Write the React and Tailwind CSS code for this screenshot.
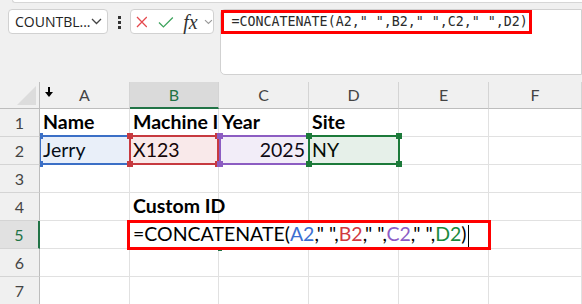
import React from "react";

const COLS = ["A", "B", "C", "D", "E", "F"];

// range highlight with corner handles
const RefBox = ({ left, top, w, h, line, fill }) => (
  <div className="absolute" style={{ left, top, width: w, height: h }}>
    <div className="absolute inset-0 border-2" style={{ borderColor: line, backgroundColor: fill }} />
    <div className="absolute w-[6px] h-[6px]" style={{ left: -2, top: -2, backgroundColor: line }} />
    <div className="absolute w-[6px] h-[6px]" style={{ left: w - 4, top: -2, backgroundColor: line }} />
    <div className="absolute w-[6px] h-[6px]" style={{ left: -2, top: h - 4, backgroundColor: line }} />
    <div className="absolute w-[6px] h-[6px]" style={{ left: w - 4, top: h - 4, backgroundColor: line }} />
  </div>
);

const Cell = ({ children, className = "" }) => (
  <div className={"border-r border-b border-[#e1e1e1] text-[19.5px] leading-[26px] text-black whitespace-nowrap pl-[3px] " + className}>
    {children}
  </div>
);

const RowHead = ({ n, active }) => (
  <div
    className={
      "flex items-center justify-center text-[16px] border-b border-[#d4d4d4] " +
      (active
        ? "bg-[#e1e1e1] text-[#217346] border-r-2 border-r-[#217346]"
        : "bg-[#f0f0f0] text-[#444] border-r border-r-[#bdbdbd]")
    }
  >
    {n}
  </div>
);

export default function App() {
  return (
    <div className="w-[582px] h-[304px] overflow-hidden bg-[#f0f0f0] font-['Lato',sans-serif]">
      {/* ribbon edge */}
      <div className="ml-[12px] h-[3px] bg-white border-b border-l border-[#d6d6d6] rounded-bl-[4px]" />

      {/* formula toolbar */}
      <div className="flex items-start pl-[8px] pt-[6px] h-[79px]">
        <div className="w-[101px] h-[25px] rounded-[4px] border border-[#d1d1d1] bg-white flex items-center justify-between pl-[6px] pr-[5px]">
          <span className="font-['Open_Sans',sans-serif] text-[14px] text-[#222] leading-none">COUNTBL...</span>
          <svg width="11" height="7" viewBox="0 0 11 7">
            <path d="M1 1l4.5 4.5L10 1" fill="none" stroke="#444" strokeWidth="1.3" />
          </svg>
        </div>
        <div className="ml-[10px] mt-[7px] flex flex-col gap-[2px]">
          <div className="w-[3px] h-[3px] bg-[#333]" />
          <div className="w-[3px] h-[3px] bg-[#333]" />
          <div className="w-[3px] h-[3px] bg-[#333]" />
        </div>
        <div className="ml-[9px] w-[84px] h-[25px] rounded-[4px] border border-[#d1d1d1] bg-white flex items-center pl-[5px]">
          <svg width="12" height="12" viewBox="0 0 12 12">
            <path d="M1 1l10 10M11 1L1 11" stroke="#e5484d" strokeWidth="1.3" />
          </svg>
          <svg className="ml-[11px]" width="16" height="12" viewBox="0 0 16 12">
            <path d="M1 6.5l4.5 4.5L15 1.5" fill="none" stroke="#3da35d" strokeWidth="1.3" />
          </svg>
          <span className="ml-[9px] font-['Liberation_Serif',serif] italic text-[20px] leading-none text-[#333]">fx</span>
          <svg className="ml-[6px]" width="9" height="6" viewBox="0 0 9 6">
            <path d="M1 1l3.5 3.5L8 1" fill="none" stroke="#999" strokeWidth="1.1" />
          </svg>
        </div>
        <div className="ml-[6px] w-[380px] h-[66px] rounded-l-[5px] border border-[#d1d1d1] bg-white">
          <div className="w-[311px] h-[24px] border-[3px] border-[#ff0000] flex items-center pl-[8px]">
            <span className="font-['DejaVu_Sans_Mono',monospace] text-[13.3px] text-[#2b2b2b] leading-none">
              =CONCATENATE(A2," ",B2," ",C2," ",D2)
            </span>
          </div>
        </div>
      </div>

      {/* sheet */}
      <div className="relative grid grid-cols-[40px_90px_89px_90px_90px_90px_93px] grid-rows-[27px_28px_28px_28px_28px_28px_28px_28px] bg-white">
        {/* corner */}
        <div className="relative bg-[#f0f0f0] border-r border-b border-[#bdbdbd]">
          <div className="absolute right-[3px] bottom-[3px] w-0 h-0 border-l-[19px] border-l-transparent border-b-[19px] border-b-[#dcdcdc]" />
        </div>
        {COLS.map((c) =>
          c === "B" ? (
            <div key={c} className="flex items-center justify-center text-[16px] bg-[#dadada] text-[#217346] border-r border-r-[#d4d4d4] border-b-2 border-b-[#217346]">
              {c}
            </div>
          ) : (
            <div key={c} className="flex items-center justify-center text-[16px] bg-[#f0f0f0] text-[#444] border-r border-r-[#d4d4d4] border-b border-b-[#bdbdbd]">
              {c}
            </div>
          )
        )}

        {/* row 1 */}
        <RowHead n={1} />
        <Cell className="font-bold">Name</Cell>
        <Cell className="font-bold overflow-hidden">Machine ID</Cell>
        <Cell className="font-bold">Year</Cell>
        <Cell className="font-bold">Site</Cell>
        <Cell />
        <Cell />

        {/* row 2 */}
        <RowHead n={2} />
        <Cell>Jerry</Cell>
        <Cell>X123</Cell>
        <Cell className="text-right pr-[3px]">2025</Cell>
        <Cell>NY</Cell>
        <Cell />
        <Cell />

        {/* row 3 */}
        <RowHead n={3} />
        <Cell />
        <Cell />
        <Cell />
        <Cell />
        <Cell />
        <Cell />

        {/* row 4 */}
        <RowHead n={4} />
        <Cell />
        <Cell className="font-bold">Custom ID</Cell>
        <Cell />
        <Cell />
        <Cell />
        <Cell />

        {/* row 5 */}
        <RowHead n={5} active />
        <Cell />
        <Cell className="col-span-4">
          =CONCATENATE(<span className="text-[#3c6fd1]">A2</span>," ",
          <span className="text-[#d13a3f]">B2</span>," ",
          <span className="text-[#8b5cc6]">C2</span>," ",
          <span className="text-[#1a8a3e]">D2</span>)
          <span className="inline-block w-px h-[22px] bg-black align-middle ml-[1px]" />
        </Cell>
        <Cell />

        {/* row 6 */}
        <RowHead n={6} />
        <Cell />
        <Cell />
        <Cell />
        <Cell />
        <Cell />
        <Cell />

        {/* row 7 */}
        <RowHead n={7} />
        <Cell />
        <Cell />
        <Cell />
        <Cell />
        <Cell />
        <Cell />

        {/* mouse cursor */}
        <svg className="absolute left-[45px] top-[5px]" width="8" height="11" viewBox="0 0 8 11">
          <path d="M4 0v6" stroke="#000" strokeWidth="2" />
          <path d="M0 5h8L4 10z" fill="#000" />
        </svg>

        {/* reference highlights + annotation */}
        <div className="absolute left-[40px] top-[27px] right-0 bottom-0 overflow-hidden">
          <RefBox left={-1} top={26} w={92} h={30} line="#3b6fc6" fill="rgba(59,111,198,0.11)" />
          <RefBox left={89} top={26} w={90} h={30} line="#c73a40" fill="rgba(199,58,64,0.11)" />
          <RefBox left={179} top={26} w={91} h={30} line="#8c5dc2" fill="rgba(140,93,194,0.11)" />
          <RefBox left={268} top={26} w={92} h={30} line="#1c7a3a" fill="rgba(28,122,58,0.11)" />
          <div className="absolute left-[178px] top-[139px] w-[4px] h-[3px] bg-[#217346]" />
          <div className="absolute left-[87px] top-[111px] w-[364px] h-[30px] border-[3px] border-[#ff0000]" />
        </div>
      </div>
    </div>
  );
}
